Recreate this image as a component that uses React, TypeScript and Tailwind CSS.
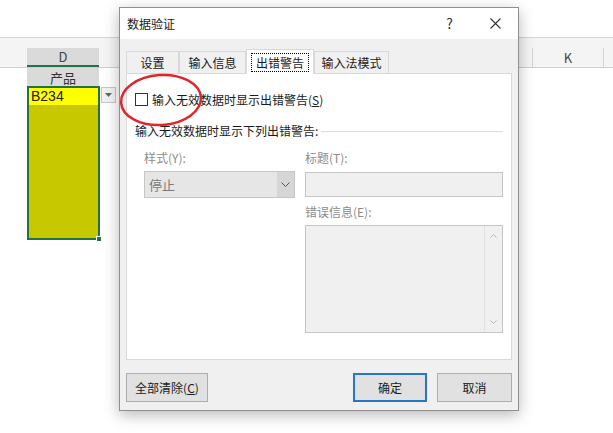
import React from 'react'

const tabs = [
    { label: '设置', w: 'w-[53px]' },
    { label: '输入信息', w: 'w-[67px]' },
    { label: '出错警告', w: 'w-[68px]', active: true },
    { label: '输入法模式', w: 'w-[75px]' },
]

function Sheet() {
    return (
        <div className="text-[#333]">
            <div className="h-[38px] border-b border-[#d4d4d4]" />
            {/* column header band */}
            <div className="flex h-[30px] items-end bg-[#f4f4f4] border-b border-[#cfcfcf]">
                <div className="w-[27px]" />
                <div className="flex h-[19px] w-[72px] items-center justify-center border-b-2 border-[#217346] bg-[#dadada] text-[13px] text-[#444]">D</div>
                <div className="flex-1" />
                <div className="flex h-[19px] w-[72px] items-center justify-center border-x border-[#d4d4d4] text-[13px] text-[#444]">K</div>
                <div className="w-[9px]" />
            </div>
            <div className="flex">
                <div className="w-[27px]" />
                <div className="flex h-[18px] w-[72px] items-center justify-center bg-[#dadada] text-[13px] leading-none">产品</div>
            </div>
            <div className="flex">
                <div className="w-[27px]" />
                <div className="relative h-[154px] w-[73px] border-2 border-[#217346] bg-[#c8c800]">
                    <div className="flex h-[17px] items-center bg-[#ffff00] pl-[2px] font-['Liberation_Sans',sans-serif] text-[14px] text-[#222]">B234</div>
                    <div className="absolute -bottom-[4px] -right-[4px] h-[6px] w-[6px] border border-white bg-[#217346]" />
                </div>
                <div className="ml-[1px] mt-[1px] flex h-[16px] w-[15px] items-center justify-center border border-[#c6c6c6] bg-[#f2f2f2]">
                    <svg width="7" height="4" viewBox="0 0 7 4"><path d="M0 0h7L3.5 4z" fill="#666" /></svg>
                </div>
            </div>
        </div>
    )
}

function Dialog() {
    return (
        <div className="absolute left-[119px] top-[7px] flex h-[404px] w-[400px] flex-col border border-[#8f8f8f] bg-[#f0f0f0] text-[12px] text-[#1a1a1a] shadow-[0_4px_14px_rgba(0,0,0,0.28)]">
            <div className="flex h-[31px] items-center bg-white">
                <span className="pl-[7px]">数据验证</span>
                <span className="ml-auto mr-[37px] text-[14px] text-[#333]">?</span>
                <svg width="11" height="11" viewBox="0 0 11 11" className="mr-[17px]"><path d="M0.5 0.5l10 10M10.5 0.5l-10 10" stroke="#333" strokeWidth="1.1" /></svg>
            </div>
            <div className="px-[6px] pt-[10px]">
                <div className="flex h-[24px] items-end">
                    {tabs.map(t =>
                        t.active ? (
                            <div key={t.label} className={`relative z-10 -mb-px flex h-[25px] ${t.w} items-center justify-center border border-b-0 border-[#d9d9d9] bg-white`}>
                                <span className="border border-dotted border-black px-[4px] leading-[17px]">{t.label}</span>
                            </div>
                        ) : (
                            <div key={t.label} className={`flex h-[22px] ${t.w} items-center justify-center border border-b-0 border-[#d9d9d9] bg-[#f0f0f0]`}>{t.label}</div>
                        )
                    )}
                </div>
                <div className="h-[287px] border border-[#d9d9d9] bg-white pl-[8px]">
                    <div className="mt-[19px] flex h-[13px] items-center">
                        <div className="h-[13px] w-[13px] border border-[#333] bg-white" />
                        <span className="ml-[4px]">输入无效数据时显示出错警告(<span className="underline">S</span>)</span>
                    </div>
                    <div className="mt-[17px] flex h-[16px] items-center pr-[8px]">
                        <span>输入无效数据时显示下列出错警告:</span>
                        <div className="ml-[3px] h-px flex-1 bg-[#dcdcdc]" />
                    </div>
                    <div className="mt-[11px] flex gap-[10px] pl-[9px] text-[#8c8c8c]">
                        <div className="w-[151px]">
                            <div className="h-[16px] leading-[16px]">样式(Y):</div>
                            <div className="mt-[5px] flex h-[27px] border border-[#c6c6c6] bg-[#e6e6e6]">
                                <span className="flex flex-1 items-center pl-[4px] text-[13px] text-[#7a7a7a]">停止</span>
                                <div className="flex w-[17px] items-center justify-center bg-[#d6d6d6]">
                                    <svg width="9" height="5" viewBox="0 0 9 5"><path d="M0.5 0.5l4 4 4-4" stroke="#555" fill="none" /></svg>
                                </div>
                            </div>
                        </div>
                        <div className="w-[198px]">
                            <div className="h-[16px] leading-[16px]">标题(T):</div>
                            <div className="mt-[6px] h-[25px] border border-[#c6c6c6] bg-[#f0f0f0]" />
                            <div className="mt-[7px] h-[16px] leading-[16px]">错误信息(E):</div>
                            <div className="mt-[5px] flex h-[108px] border border-[#c6c6c6] bg-[#f0f0f0]">
                                <div className="flex-1" />
                                <div className="flex w-[18px] flex-col items-center justify-between border-l border-[#e2e2e2] py-[8px]">
                                    <svg width="7" height="4" viewBox="0 0 7 4"><path d="M0.5 3.5l3-3 3 3" stroke="#b8b8b8" fill="none" /></svg>
                                    <svg width="7" height="4" viewBox="0 0 7 4"><path d="M0.5 0.5l3 3 3-3" stroke="#b8b8b8" fill="none" /></svg>
                                </div>
                            </div>
                        </div>
                    </div>
                </div>
            </div>
            <div className="mt-[13px] flex px-[6px]">
                <button type="button" className="h-[29px] w-[82px] border border-[#adadad] bg-[#e1e1e1]">全部清除(<span className="underline">C</span>)</button>
                <button type="button" className="ml-auto h-[29px] w-[74px] border-2 border-[#2a76c6] bg-[#e1e1e1]">确定</button>
                <button type="button" className="ml-[10px] h-[29px] w-[75px] border border-[#adadad] bg-[#e1e1e1]">取消</button>
            </div>
        </div>
    )
}

export default function App() {
    return (
        <div className="relative h-[433px] w-[613px] overflow-hidden bg-white font-['Noto_Sans_CJK_SC',sans-serif]">
            <Sheet />
            <Dialog />
            {/* red circle marking the checkbox */}
            <svg className="absolute left-[117px] top-[71px]" width="90" height="58" viewBox="0 0 90 58">
                <ellipse cx="44" cy="29" rx="40" ry="25" transform="rotate(-4 44 29)" fill="none" stroke="#e0262b" strokeWidth="2.5" />
            </svg>
        </div>
    )
}
